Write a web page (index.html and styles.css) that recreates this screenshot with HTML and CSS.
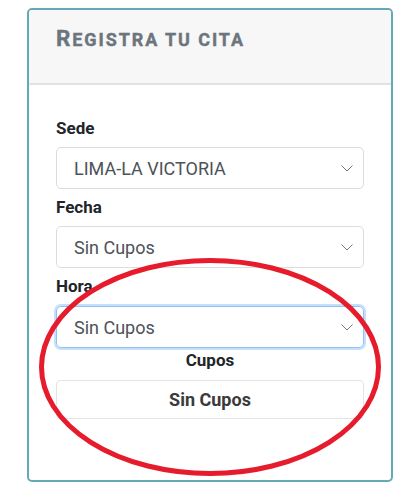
FILE: index.html
```html
<!DOCTYPE html>
<html lang="es">
<head>
<meta charset="utf-8">
<link rel="stylesheet" href="styles.css">
</head>
<body>
<div class="card">
  <div class="card-header"><h5 class="title"><span class="big">R</span>egistra tu cita</h5></div>
  <div class="card-body">
    <label class="label">Sede</label>
    <div class="select"><span>LIMA-LA VICTORIA</span><svg class="chev" viewBox="0 0 12 7"><path d="M0.5 0.5 L6 6 L11.5 0.5" fill="none" stroke="#777" stroke-width="1"/></svg></div>
    <label class="label">Fecha</label>
    <div class="select"><span>Sin Cupos</span><svg class="chev" viewBox="0 0 12 7"><path d="M0.5 0.5 L6 6 L11.5 0.5" fill="none" stroke="#777" stroke-width="1"/></svg></div>
    <label class="label">Hora</label>
    <div class="select focus"><span>Sin Cupos</span><svg class="chev" viewBox="0 0 12 7"><path d="M0.5 0.5 L6 6 L11.5 0.5" fill="none" stroke="#777" stroke-width="1"/></svg></div>
    <div class="label center">Cupos</div>
    <div class="cupos">Sin Cupos</div>
  </div>
</div>
<svg class="mark" width="416" height="497" viewBox="0 0 416 497"><ellipse cx="210" cy="367" rx="168.5" ry="106.5" fill="none" stroke="#e61b2b" stroke-width="5"/></svg>
</body>
</html>
```
FILE: styles.css
```css
* { box-sizing: border-box; }
html, body { margin: 0; padding: 0; background: #fff; }
body {
  font-family: Roboto, "Liberation Sans", sans-serif;
  width: 416px;
  height: 497px;
  position: relative;
  padding-top: 8px;
}
.card {
  margin-left: 27px;
  width: 366px;
  height: 474px;
  border: 2px solid #62aab6;
  border-radius: 5px;
  overflow: hidden;
}
.card-header {
  height: 75px;
  background: #f7f7f7;
  border-bottom: 2px solid #e2e2e2;
  padding: 15px 27px 0;
}
.title {
  margin: 0;
  font-size: 18px;
  line-height: 26px;
  font-weight: 700;
  text-transform: uppercase;
  letter-spacing: 1.9px;
  -webkit-text-stroke: 0.4px #6c757d;
  color: #6c757d;
}
.title .big { font-size: 22.5px; }
.card-body {
  padding: 31px 27px 0;
  display: flex;
  flex-direction: column;
}
.label {
  display: block;
  font-size: 17px;
  line-height: 24px;
  font-weight: 700;
  color: #212529;
  margin: 0 0 7px;
}
.select + .label { margin-top: 6px; }
.select + .label.center { margin-top: 0; }
.center { text-align: center; margin-bottom: 8px; }
.select {
  height: 42px;
  border: 1.5px solid #dcdcdc;
  border-radius: 5px;
  padding: 0 10px 0 17px;
  display: flex;
  align-items: center;
  justify-content: space-between;
  font-size: 18px;
  color: #4d5258;
}
.select.focus {
  height: 42px;
  border-color: #8ec2f2;
  box-shadow: 0 0 0 2px #c6e0fb;
  margin-top: 1px;
}
.chev { width: 12px; height: 7px; }
.cupos {
  height: 39px;
  border: 1.5px solid #e4e4e4;
  border-radius: 4px;
  display: flex;
  align-items: center;
  justify-content: center;
  font-size: 18px;
  font-weight: 700;
  color: #3a3a3a;
}
.mark { position: absolute; left: 0; top: 0; pointer-events: none; }
```
